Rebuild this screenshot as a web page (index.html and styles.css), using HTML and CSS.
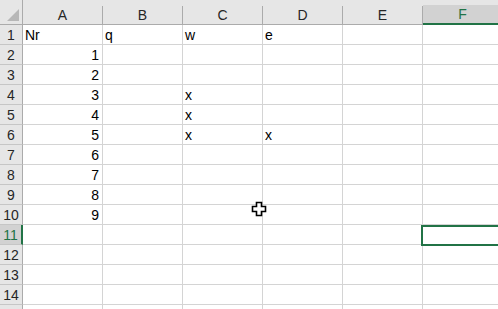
FILE: index.html
```html
<!DOCTYPE html>
<html lang="en">
<head>
    <meta charset="UTF-8">
    <title>Sheet1</title>
    <link rel="stylesheet" href="styles.css">
</head>
<body>

<div class="sheet">
    <div class="topband"></div>

    <div class="row head">
        <div class="corner"><span class="tri"></span></div>
        <div class="colhead">A</div>
        <div class="colhead">B</div>
        <div class="colhead">C</div>
        <div class="colhead">D</div>
        <div class="colhead">E</div>
        <div class="colhead active">F</div>
    </div>

    <div class="row"><div class="rowhead">1</div><div class="cell">Nr</div><div class="cell">q</div><div class="cell">w</div><div class="cell">e</div><div class="cell"></div><div class="cell"></div></div>
    <div class="row"><div class="rowhead">2</div><div class="cell num">1</div><div class="cell"></div><div class="cell"></div><div class="cell"></div><div class="cell"></div><div class="cell"></div></div>
    <div class="row"><div class="rowhead">3</div><div class="cell num">2</div><div class="cell"></div><div class="cell"></div><div class="cell"></div><div class="cell"></div><div class="cell"></div></div>
    <div class="row"><div class="rowhead">4</div><div class="cell num">3</div><div class="cell"></div><div class="cell">x</div><div class="cell"></div><div class="cell"></div><div class="cell"></div></div>
    <div class="row"><div class="rowhead">5</div><div class="cell num">4</div><div class="cell"></div><div class="cell">x</div><div class="cell"></div><div class="cell"></div><div class="cell"></div></div>
    <div class="row"><div class="rowhead">6</div><div class="cell num">5</div><div class="cell"></div><div class="cell">x</div><div class="cell">x</div><div class="cell"></div><div class="cell"></div></div>
    <div class="row"><div class="rowhead">7</div><div class="cell num">6</div><div class="cell"></div><div class="cell"></div><div class="cell"></div><div class="cell"></div><div class="cell"></div></div>
    <div class="row"><div class="rowhead">8</div><div class="cell num">7</div><div class="cell"></div><div class="cell"></div><div class="cell"></div><div class="cell"></div><div class="cell"></div></div>
    <div class="row"><div class="rowhead">9</div><div class="cell num">8</div><div class="cell"></div><div class="cell"></div><div class="cell"></div><div class="cell"></div><div class="cell"></div></div>
    <div class="row"><div class="rowhead">10</div><div class="cell num">9</div><div class="cell"></div><div class="cell"></div><div class="cell"></div><div class="cell"></div><div class="cell"></div></div>
    <div class="row"><div class="rowhead active">11</div><div class="cell"></div><div class="cell"></div><div class="cell"></div><div class="cell"></div><div class="cell"></div><div class="cell"></div></div>
    <div class="row"><div class="rowhead">12</div><div class="cell"></div><div class="cell"></div><div class="cell"></div><div class="cell"></div><div class="cell"></div><div class="cell"></div></div>
    <div class="row"><div class="rowhead">13</div><div class="cell"></div><div class="cell"></div><div class="cell"></div><div class="cell"></div><div class="cell"></div><div class="cell"></div></div>
    <div class="row"><div class="rowhead">14</div><div class="cell"></div><div class="cell"></div><div class="cell"></div><div class="cell"></div><div class="cell"></div><div class="cell"></div></div>
    <div class="row"><div class="rowhead"></div><div class="cell"></div><div class="cell"></div><div class="cell"></div><div class="cell"></div><div class="cell"></div><div class="cell"></div></div>

    <!-- selected cell F11 -->
    <div class="selection"></div>

    <!-- mouse pointer -->
    <svg class="pointer" width="16" height="16" viewBox="0 0 16 16">
        <path d="M5.5 1.5 h5 v4 h4 v5 h-4 v4 h-5 v-4 h-4 v-5 h4 z" fill="#fff" stroke="#000" stroke-width="1.6"/>
    </svg>
</div>

</body>
</html>
```

FILE: styles.css
```css
body {
    margin: 0;
    background: #fff;
    overflow: hidden;
    font-family: "Liberation Sans", Arial, sans-serif;
}

.sheet {
    position: relative;
    width: 498px;
    height: 309px;
    overflow: hidden;
}

.topband {
    height: 6px;
    background: #e6e6e6;
}

.row {
    display: grid;
    grid-template-columns: 23px repeat(6, 80px);
    height: 20px;
}

.head {
    height: 19px;
}

.row > div {
    box-sizing: border-box;
    border-right: 1px solid #d4d4d4;
    border-bottom: 1px solid #d4d4d4;
    font-size: 14px;
    line-height: 20px;
    color: #000;
    white-space: nowrap;
    overflow: hidden;
}

.corner {
    position: relative;
    background: #e6e6e6;
    border-right-color: #ababab !important;
    border-bottom-color: #ababab !important;
    margin-top: -6px;
    height: 25px;
}

.tri {
    position: absolute;
    right: 3px;
    bottom: 3px;
    width: 0;
    height: 0;
    border-left: 12px solid transparent;
    border-bottom: 12px solid #b7b7b7;
}

.colhead {
    background: #e6e6e6;
    text-align: center;
    color: #262626 !important;
    border-right-color: #ababab !important;
    border-bottom-color: #ababab !important;
    line-height: 18px !important;
}

.colhead.active {
    background: #d2d2d2;
    color: #217346 !important;
    border-bottom: 2px solid #217346 !important;
    margin-top: -1px;
    height: 20px;
}

.rowhead {
    background: #e6e6e6;
    text-align: center;
    color: #262626 !important;
    border-right-color: #ababab !important;
    border-bottom-color: #c6c6c6 !important;
}

.rowhead.active {
    background: #d2d2d2;
    color: #217346 !important;
    border-right: 2px solid #217346 !important;
}

.cell {
    padding: 0 3px 0 2px;
}

.num {
    text-align: right;
}

.selection {
    position: absolute;
    left: 421px;
    top: 225px;
    width: 90px;
    height: 21px;
    box-sizing: border-box;
    border: 2px solid #217346;
}

.pointer {
    position: absolute;
    left: 251px;
    top: 201px;
}
```
